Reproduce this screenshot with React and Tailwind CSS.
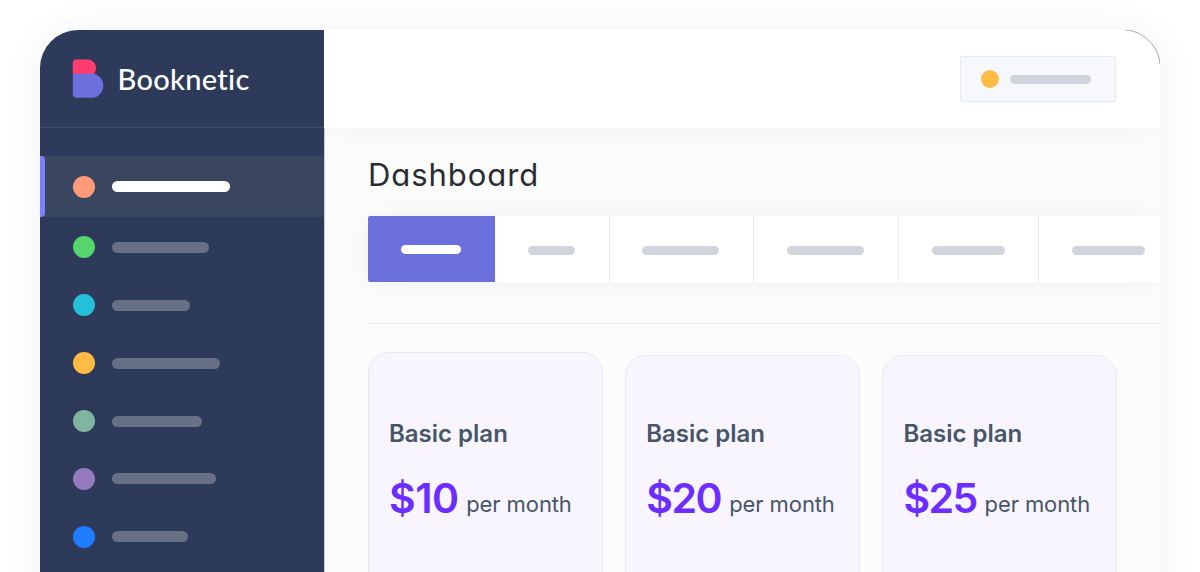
const menu = [
  { dot: "bg-[#55d56b]", bar: "w-[97.5px]" },
  { dot: "bg-[#26c0d9]", bar: "w-[78px]" },
  { dot: "bg-[#ffbb44]", bar: "w-[108.5px]" },
  { dot: "bg-[#80b5a1]", bar: "w-[90px]" },
  { dot: "bg-[#957bbe]", bar: "w-[104px]" },
  { dot: "bg-[#1f7bff]", bar: "w-[75.8px]" },
];

const tabs = [
  { cell: "w-[114px] pl-[33px]", bar: "w-[47.5px]" },
  { cell: "w-[144.5px] border-l pl-[32.5px]", bar: "w-[77px]" },
  { cell: "w-[145px] border-l pl-[32.5px]", bar: "w-[77.5px]" },
  { cell: "w-[140px] border-l pl-[32.5px]", bar: "w-[73.5px]" },
  { cell: "w-[122px] border-l pl-[32.5px]", bar: "w-[73.5px]" },
];

const plans = [
  { price: "$10", card: "pt-[64.5px]", tracking: "tracking-[-0.5px]", gap: "gap-[7.7px]" },
  { price: "$20", card: "mt-[2.5px] pt-[62px]", tracking: "tracking-[-1.4px]", gap: "gap-[8px]" },
  { price: "$25", card: "mt-[2.5px] pt-[62px]", tracking: "tracking-[-1.6px]", gap: "gap-[8px]" },
];

function Logo() {
  return (
    <svg width="32" height="40" viewBox="0 0 32 40" className="shrink-0">
      <path d="M4 0.5H15.5C20.2 0.5 24 4.3 24 9C24 11.2 23.4 13.2 22 15H0.8V3.7C0.8 1.9 2.2 0.5 4 0.5Z" fill="#ff3e70" />
      <path d="M0.8 14.8H20.5C26.5 15.2 31.3 20.2 31.3 26.7C31.3 33.3 26.1 38.8 19.5 38.8H4.5C2.4 38.8 0.8 37.3 0.8 35.2Z" fill="#6c70dc" />
    </svg>
  );
}

function Sidebar() {
  return (
    <aside className="w-[284px] shrink-0 bg-[#2d3a5a]">
      <div className="flex h-[98px] items-start gap-[13.5px] border-b border-[#414d6b] pl-[32px] pt-[29px]">
        <Logo />
        <span className="font-[Lato] text-[29px] font-medium leading-[40px] tracking-[0.3px] text-white">Booknetic</span>
      </div>
      <div className="mt-[28px] flex h-[61px] items-center bg-[#3a4560]">
        <div className="h-full w-[4.6px] rounded-r-[4px] bg-[#7b80ff]" />
        <div className="ml-[28.2px] size-[22px] rounded-full bg-[#ff9b79]" />
        <div className="ml-[17.2px] h-[11px] w-[118px] rounded-full bg-white" />
      </div>
      <div className="pt-[1.4px]">
        {menu.map((item) => (
          <div key={item.dot} className="flex h-[57.9px] items-center gap-[17.2px] pl-[32.8px]">
            <div className={`size-[22px] rounded-full ${item.dot}`} />
            <div className={`h-[11px] rounded-full bg-[#677084] ${item.bar}`} />
          </div>
        ))}
      </div>
    </aside>
  );
}

function PlanCard({ price, card, tracking, gap }) {
  return (
    <section className={`h-[320px] w-[235px] shrink-0 rounded-[21px] border border-[#e9e8f0] bg-[#f8f5ff] pl-[20px] font-[Inter] text-[#475569] ${card}`}>
      <h2 className="text-[24px] font-semibold leading-[32px]">Basic plan</h2>
      <div className={`mt-[23px] flex items-baseline whitespace-nowrap ${gap}`}>
        <span className={`text-[41px] font-semibold leading-[50px] text-[#6b2eff] ${tracking}`}>{price}</span>
        <span className="relative -top-px text-[22px] tracking-[-0.1px]">per month</span>
      </div>
    </section>
  );
}

export default function App() {
  return (
    <div className="h-[572px] overflow-hidden bg-white pl-[40px] pt-[30px]">
      <div className="relative h-[600px] w-[1120px] rounded-t-[38px] shadow-[0_0_40px_rgba(0,0,0,0.06)]">
        <div className="flex h-full overflow-hidden rounded-t-[38px] bg-[#fcfcfc]">
          <Sidebar />
          <main className="min-w-0 flex-1 overflow-hidden">
            <header className="relative flex h-[98px] justify-end bg-white pr-[44px] pt-[26px] shadow-[0_0_28px_rgba(0,0,0,0.05)]">
              <div className="flex h-[46px] w-[156px] items-center rounded-[2px] border border-[#e2e8f4] bg-[#f6f8fc] pl-[20.4px]">
                <div className="size-[18px] rounded-full bg-[#ffbb44]" />
                <div className="ml-[10.6px] h-[9px] w-[81px] rounded-full bg-[#cfd4dd]" />
              </div>
            </header>
            <div className="h-[502px] border-l border-[#c8ccd8] pl-[43px]">
              <h1 className="h-[88px] pt-[24px] font-[Inter] text-[31px] font-normal leading-[46px] tracking-[0.95px] text-[#292d32] [font-feature-settings:'cv11']">Dashboard</h1>
              <nav className="flex h-[66px] w-[792px] rounded-[2px] bg-white shadow-[0_0_34px_rgba(0,0,0,0.05)]">
                <div className="flex w-[126.5px] shrink-0 items-center rounded-l-[2px] bg-[#6c70dc] pl-[32.5px]">
                  <div className="h-[9px] w-[60.5px] rounded-full bg-white" />
                </div>
                {tabs.map((tab, i) => (
                  <div key={i} className={`flex shrink-0 items-center border-[#e6eaf5] pt-[2px] ${tab.cell}`}>
                    <div className={`h-[9px] rounded-full bg-[#cfd4dd] ${tab.bar}`} />
                  </div>
                ))}
              </nav>
              <div className="mt-[40.5px] border-t border-[#e8ebf3]" />
              <div className="mt-[28.5px] flex items-start gap-[22.2px]">
                {plans.map((plan) => (
                  <PlanCard key={plan.price} {...plan} />
                ))}
              </div>
            </div>
          </main>
        </div>
        <svg className="absolute right-0 top-0" width="38" height="38" viewBox="0 0 38 38" fill="none">
          <path d="M4 0.2C21 0.6 37.4 17 37.8 34" stroke="#333" strokeWidth="0.4" />
        </svg>
      </div>
    </div>
  );
}
